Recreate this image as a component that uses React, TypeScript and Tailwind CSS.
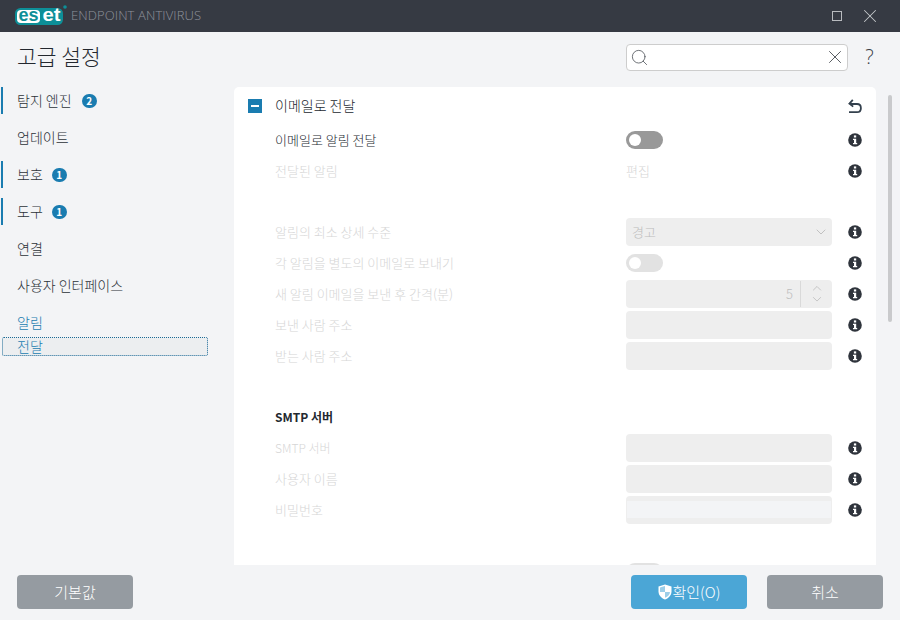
import { ChevronDown, ChevronUp, Search, X } from 'lucide-react';

const font = "font-['Noto_Sans_CJK_KR','Liberation_Sans',sans-serif]";

function InfoIcon() {
  return (
    <svg width="14" height="14" viewBox="0 0 14 14" className="shrink-0">
      <circle cx="7" cy="7" r="6.8" fill="#2f343c" />
      <rect x="5.9" y="2.4" width="2.3" height="2.1" fill="#fff" />
      <path d="M5 5.7h3.2v4.2h1v1.4H5V9.9h1V7.1H5z" fill="#fff" />
    </svg>
  );
}

function UndoIcon() {
  return (
    <svg width="16" height="16" viewBox="0 0 16 16" fill="none" stroke="#33404d" strokeWidth="1.8">
      <path d="M2 14.200h8c2.400 0 3.900-1.700 3.900-4S12.400 6 10 6H3" />
      <path d="M5.800 1.800 2.400 5.600l3.800 3" />
    </svg>
  );
}

function ShieldIcon() {
  return (
    <svg width="14" height="16" viewBox="0 0 14 16" className="shrink-0">
      <path d="M7 .5 13.500 2.500v5c0 3.800-2.700 6.500-6.500 8-3.800-1.500-6.500-4.200-6.500-8v-5z" fill="#fff" />
      <path d="M7 2 2 3.500V8h5zM7 8v5.800c2.800-1.200 5-3.200 5-5.800z" fill="#4ba6d6" opacity="0.55" />
    </svg>
  );
}

function Logo() {
  return (
    <svg width="52" height="20" viewBox="0 0 52 20" className="shrink-0">
      <rect x="0" y="3" width="48" height="17" rx="5.500" fill="#0d8f98" />
      <rect x="2" y="5" width="23" height="13" rx="4" fill="#fff" />
      <text x="3.500" y="16" fontFamily="Liberation Sans" fontWeight="700" fontSize="19" textLength="20" lengthAdjust="spacingAndGlyphs" fill="#0d8f98">
        es
      </text>
      <text x="27.500" y="16" fontFamily="Liberation Sans" fontWeight="700" fontSize="19" textLength="18" lengthAdjust="spacingAndGlyphs" fill="#fff">
        et
      </text>
      <circle cx="50" cy="2" r="1.800" fill="#0d8f98" />
    </svg>
  );
}

function Toggle({ disabled }: { disabled?: boolean }) {
  return (
    <div className={`flex h-[18px] w-[37px] items-center rounded-full pl-[3px] ${disabled ? 'bg-[#e2e2e2]' : 'bg-[#999999]'}`}>
      <div className="h-[12px] w-[12px] rounded-full bg-white" />
    </div>
  );
}

function Field({ password }: { password?: boolean }) {
  return (
    <div className="flex h-[28px] w-full items-center rounded-[4px] bg-[#eeeeee] px-[1px]">
      {password && <div className="h-[17px] w-full bg-[#f3f4f6]" />}
    </div>
  );
}

function Row({ label, control, strong, small }: { label?: string; control?: React.ReactNode; strong?: boolean; small?: boolean }) {
  return (
    <div className="flex h-[31px] items-center pl-[41px]">
      <div className={`w-[351px] ${small ? 'text-[12px]' : 'text-[13px]'} ${strong ? 'text-[#23282f]' : 'text-[#d6d6d6]'}`}>{label}</div>
      <div className="flex w-[206px] items-center">{control}</div>
      <div className="ml-[16px]">
        <InfoIcon />
      </div>
    </div>
  );
}

const navItems = [
  { label: '탐지 엔진', badge: '2', bar: true, gap: 'ml-[10px]' },
  { label: '업데이트' },
  { label: '보호', badge: '1', bar: true, gap: 'ml-[9px]' },
  { label: '도구', badge: '1', bar: true, gap: 'ml-[9px]' },
  { label: '연결' },
  { label: '사용자 인터페이스' },
];

export default function App() {
  return (
    <div className={`flex h-[620px] w-[900px] flex-col overflow-hidden bg-[#f3f4f6] font-light ${font}`}>
      {/* Title bar */}
      <div className="flex h-[32px] shrink-0 items-center bg-[#363a43] pb-[3px] pl-[15px] pr-[19px]">
        <Logo />
        <span className="ml-[4px] mt-[3px] font-['Open_Sans',sans-serif] text-[13px] font-light tracking-[0.1px] text-[#8f939b]">
          ENDPOINT ANTIVIRUS
        </span>
        <div className="ml-auto mt-[3px] h-[10px] w-[10px] border border-[#b9bbbf]" />
        <X size={22} strokeWidth={1.1} className="ml-[17px] mt-[3px] text-[#c5c7ca]" />
      </div>

      {/* Header */}
      <div className="flex h-[55px] shrink-0 items-center pb-[5px] pl-[17px] pr-[19px]">
        <h1 className="-mt-[2px] text-[21.500px] font-light text-[#23282f]">고급 설정</h1>
        <div className="ml-auto flex h-[27px] w-[222px] items-center justify-between rounded-[4px] border border-[#cdcdcd] bg-white pl-[3px] pr-[1px]">
          <Search size={19} strokeWidth={1} className="text-[#4a4f55]" />
          <X size={22} strokeWidth={1} className="text-[#4a4f55]" />
        </div>
        <span className="ml-[10px] w-[23px] text-center font-['Open_Sans',sans-serif] text-[20px] font-light text-[#3a3f46]">?</span>
      </div>

      {/* Body */}
      <div className="flex min-h-0 flex-1">
        <aside className="w-[234px] shrink-0 text-[14px] text-[#2c3238]">
          {navItems.map((item) => (
            <div
              key={item.label}
              className={`mb-[10px] flex h-[27px] items-center ${item.bar ? 'ml-[1px] border-l-[2px] border-[#1a7cb0] pl-[14px]' : 'pl-[17px]'}`}
            >
              <span>{item.label}</span>
              {item.badge && (
                <span className={`flex h-[14px] w-[15px] items-center justify-center rounded-full bg-[#1a7cb0] text-[10px] font-bold text-white ${item.gap}`}>
                  {item.badge}
                </span>
              )}
            </div>
          ))}
          <div className="flex h-[27px] items-center pl-[17px] text-[#1a7cb0]">알림</div>
          <div className="ml-[2px] mt-px flex h-[19px] w-[206px] items-center rounded-[2px] border border-dotted border-[#1a6a96] bg-[#eceef0] pl-[14px] text-[#1a7cb0]">
            전달
          </div>
        </aside>

        <main className="h-[478px] w-[642px] shrink-0 overflow-hidden rounded-t-[5px] bg-white">
          <div className="flex h-[37px] items-center pl-[14px] pr-[13px]">
            <div className="flex h-[14px] w-[14px] items-center justify-center bg-[#1a7cb0]">
              <div className="h-[2px] w-[8px] bg-white" />
            </div>
            <span className="ml-[13px] text-[14px] text-[#23282f]">이메일로 전달</span>
            <div className="ml-auto">
              <UndoIcon />
            </div>
          </div>

          <Row label="이메일로 알림 전달" strong control={<Toggle />} />
          <Row label="전달된 알림" control={<span className="text-[13px] text-[#d6d6d6]">편집</span>} />
          <div className="h-[30px]" />
          <Row
            label="알림의 최소 상세 수준"
            control={
              <div className="flex h-[28px] w-full items-center justify-between rounded-[4px] bg-[#eeeeee] pl-[6px] pr-[3px] text-[13px] text-[#bdbdbd]">
                경고
                <ChevronDown size={16} strokeWidth={1.2} className="text-[#b5b5b5]" />
              </div>
            }
          />
          <Row label="각 알림을 별도의 이메일로 보내기" control={<Toggle disabled />} />
          <Row
            label="새 알림 이메일을 보낸 후 간격(분)"
            control={
              <div className="flex h-[28px] w-full items-center justify-end rounded-[4px] bg-[#eeeeee] text-[13px] text-[#bdbdbd]">
                5
                <div className="ml-[7px] flex h-[26px] w-[32px] flex-col items-center justify-center border-l border-[#d9d9d9]">
                  <ChevronUp size={16} strokeWidth={1.2} className="text-[#b5b5b5]" />
                  <ChevronDown size={16} strokeWidth={1.2} className="-mt-[3px] text-[#b5b5b5]" />
                </div>
              </div>
            }
          />
          <Row label="보낸 사람 주소" control={<Field />} />
          <Row label="받는 사람 주소" control={<Field />} />
          <div className="h-[31px]" />
          <div className="flex h-[30px] items-center pl-[41px] text-[12px] font-bold text-[#23282f]">SMTP 서버</div>
          <Row label="SMTP 서버" small control={<Field />} />
          <Row label="사용자 이름" control={<Field />} />
          <Row label="비밀번호" control={<Field password />} />
          <div className="h-[31px]" />
          <Row label="" control={<Toggle disabled />} />
        </main>

        {/* Scrollbar */}
        <div className="ml-[12px] mt-[8px] h-[227px] w-[4px] rounded-full bg-[#c9cacc]" />
      </div>

      {/* Footer */}
      <div className="flex h-[55px] shrink-0 items-start px-[17px] pt-[10px] text-[15px] text-white">
        <button className="flex h-[34px] w-[116px] items-center justify-center rounded-[4px] bg-[#959ba1]">기본값</button>
        <button className="ml-auto flex h-[34px] w-[116px] items-center justify-center gap-[1px] rounded-[4px] bg-[#4ba6d6]">
          <ShieldIcon />
          확인(O)
        </button>
        <button className="ml-[20px] flex h-[34px] w-[116px] items-center justify-center rounded-[4px] bg-[#959ba1]">취소</button>
      </div>
    </div>
  );
}
